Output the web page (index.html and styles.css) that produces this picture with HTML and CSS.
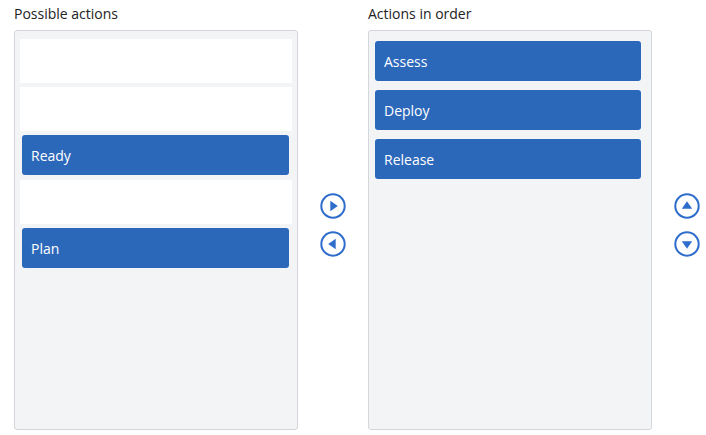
FILE: index.html
```html
<!DOCTYPE html>
<html lang="en">
<head>
    <meta charset="UTF-8">
    <meta name="viewport" content="width=device-width, initial-scale=1.0">
    <title>Order actions</title>
    <link rel="stylesheet" href="styles.css">
</head>
<body>
    <div class="board">
        <div class="column">
            <div class="label">Possible actions</div>
            <div class="list">
                <div class="slot"></div>
                <div class="slot"></div>
                <div class="slot filled"><div class="item">Ready</div></div>
                <div class="slot"></div>
                <div class="slot filled"><div class="item">Plan</div></div>
            </div>
        </div>

        <div class="controls">
            <button class="round-btn" title="Add">
                <svg viewBox="0 0 26 26" width="26" height="26"><circle cx="13" cy="13" r="11.7" fill="none" stroke="#2f6dcc" stroke-width="2"/><path d="M10.3 7.8 L17.8 13 L10.3 18.2 Z" fill="#2f6dcc"/></svg>
            </button>
            <button class="round-btn" title="Remove">
                <svg viewBox="0 0 26 26" width="26" height="26"><circle cx="13" cy="13" r="11.7" fill="none" stroke="#2f6dcc" stroke-width="2"/><path d="M15.7 7.8 L8.2 13 L15.7 18.2 Z" fill="#2f6dcc"/></svg>
            </button>
        </div>

        <div class="column">
            <div class="label">Actions in order</div>
            <div class="list ordered">
                <div class="slot filled"><div class="item">Assess</div></div>
                <div class="slot filled"><div class="item">Deploy</div></div>
                <div class="slot filled"><div class="item">Release</div></div>
            </div>
        </div>

        <div class="controls">
            <button class="round-btn" title="Move up">
                <svg viewBox="0 0 26 26" width="26" height="26"><circle cx="13" cy="13" r="11.7" fill="none" stroke="#2f6dcc" stroke-width="2"/><path d="M7.8 15.7 L13 8.2 L18.2 15.7 Z" fill="#2f6dcc"/></svg>
            </button>
            <button class="round-btn" title="Move down">
                <svg viewBox="0 0 26 26" width="26" height="26"><circle cx="13" cy="13" r="11.7" fill="none" stroke="#2f6dcc" stroke-width="2"/><path d="M7.8 10.3 L13 17.8 L18.2 10.3 Z" fill="#2f6dcc"/></svg>
            </button>
        </div>
    </div>
</body>
</html>
```

FILE: styles.css
```css
body {
    margin: 0;
    background: #fff;
    font-family: "Open Sans", "Noto Sans", Arial, sans-serif;
    color: #222;
}
.board {
    display: flex;
    gap: 22px;
    padding: 4px 0 4px 14px;
}
.column {
    display: flex;
    flex-direction: column;
    flex-shrink: 0;
    width: 284px;
}
.label {
    font-size: 14px;
    line-height: 20px;
    margin-bottom: 6px;
}
.list {
    box-sizing: border-box;
    height: 400px;
    padding: 8px 5px;
    background: #f2f4f6;
    border: 1px solid #d3d6da;
    border-radius: 3px;
}
.slot {
    height: 44px;
    margin-bottom: 4px;
    background: #fff;
    display: flex;
}
.slot.filled {
    height: 40px;
    margin-bottom: 5px;
    background: transparent;
}
.ordered .slot.filled {
    height: 44px;
}
.item {
    flex: 1;
    margin: 0 3px 0 2px;
    padding-left: 9px;
    display: flex;
    align-items: center;
    background: #2c68ba;
    color: #fff;
    font-size: 14px;
    border-radius: 3px;
}
.ordered .item {
    margin: 2px 5px 2px 1px;
}
.controls {
    flex-shrink: 0;
    margin-top: 30px;
    height: 400px;
    padding-bottom: 18px;
    box-sizing: border-box;
    display: flex;
    flex-direction: column;
    justify-content: center;
    gap: 12px;
}
.round-btn {
    width: 26px;
    height: 26px;
    padding: 0;
    border: none;
    background: none;
    cursor: pointer;
    display: block;
}
.round-btn svg {
    display: block;
}
```
